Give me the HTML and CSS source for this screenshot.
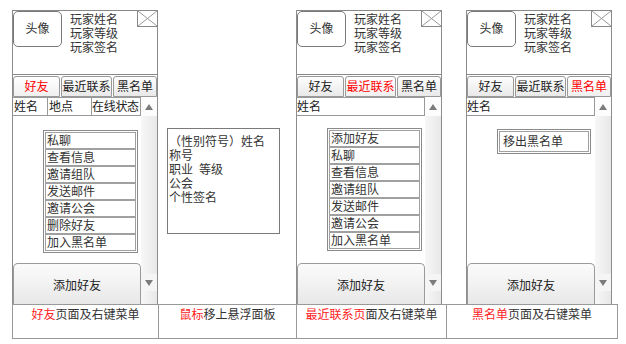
FILE: index.html
```html
<!DOCTYPE html>
<html lang="zh-CN">
<head>
  <meta charset="UTF-8" />
  <meta name="viewport" content="width=device-width, initial-scale=1" />
  <title>好友界面原型</title>
  <link rel="stylesheet" href="styles.css">
</head>
<body>
  <div class="board">
    <div class="screens">

      <!-- 好友页面 -->
      <section class="panel">
        <div class="top">
          <div class="avatar">头像</div>
          <div class="info">
            <div class="ln">玩家姓名</div>
            <div class="ln">玩家等级</div>
            <div class="ln">玩家签名</div>
          </div>
          <svg class="close" width="21" height="17" viewBox="0 0 21 17">
            <rect x="0.5" y="0.5" width="20" height="16" fill="#fff" stroke="#888"/>
            <path d="M1 1 L20 16 M20 1 L1 16" stroke="#999" stroke-width="1"/>
          </svg>
        </div>
        <div class="tabs">
          <div class="tab t1 on">好友</div>
          <div class="tab t2">最近联系</div>
          <div class="tab t3">黑名单</div>
        </div>
        <div class="list">
          <div class="main">
            <div class="head">
              <div class="cell c1">姓名</div>
              <div class="cell c2">地点</div>
              <div class="cell c3">在线状态</div>
            </div>
            <div class="menu">
              <div class="item">私聊</div>
              <div class="item">查看信息</div>
              <div class="item">邀请组队</div>
              <div class="item">发送邮件</div>
              <div class="item">邀请公会</div>
              <div class="item">删除好友</div>
              <div class="item">加入黑名单</div>
            </div>
            <div class="add">添加好友</div>
          </div>
          <div class="scroll">
            <div class="up"><i></i></div>
            <div class="track"></div>
            <div class="down"><i></i></div>
          </div>
        </div>
      </section>

      <!-- 悬浮面板 -->
      <div class="hover-col">
        <div class="tip">
          <div class="ln">（性别符号）姓名</div>
          <div class="ln">称号</div>
          <div class="ln">职业&ensp;等级</div>
          <div class="ln">公会</div>
          <div class="ln">个性签名</div>
        </div>
      </div>

      <!-- 最近联系页面 -->
      <section class="panel">
        <div class="top">
          <div class="avatar">头像</div>
          <div class="info">
            <div class="ln">玩家姓名</div>
            <div class="ln">玩家等级</div>
            <div class="ln">玩家签名</div>
          </div>
          <svg class="close" width="21" height="17" viewBox="0 0 21 17">
            <rect x="0.5" y="0.5" width="20" height="16" fill="#fff" stroke="#888"/>
            <path d="M1 1 L20 16 M20 1 L1 16" stroke="#999" stroke-width="1"/>
          </svg>
        </div>
        <div class="tabs">
          <div class="tab t1">好友</div>
          <div class="tab t2 on">最近联系</div>
          <div class="tab t3">黑名单</div>
        </div>
        <div class="list">
          <div class="main">
            <div class="head">
              <div class="cell wide">姓名</div>
            </div>
            <div class="menu menu-recent">
              <div class="item">添加好友</div>
              <div class="item">私聊</div>
              <div class="item">查看信息</div>
              <div class="item">邀请组队</div>
              <div class="item">发送邮件</div>
              <div class="item">邀请公会</div>
              <div class="item">加入黑名单</div>
            </div>
            <div class="add">添加好友</div>
          </div>
          <div class="scroll">
            <div class="up"><i></i></div>
            <div class="track"></div>
            <div class="down"><i></i></div>
          </div>
        </div>
      </section>

      <div class="gap"></div>

      <!-- 黑名单页面 -->
      <section class="panel">
        <div class="top">
          <div class="avatar">头像</div>
          <div class="info">
            <div class="ln">玩家姓名</div>
            <div class="ln">玩家等级</div>
            <div class="ln">玩家签名</div>
          </div>
          <svg class="close" width="21" height="17" viewBox="0 0 21 17">
            <rect x="0.5" y="0.5" width="20" height="16" fill="#fff" stroke="#888"/>
            <path d="M1 1 L20 16 M20 1 L1 16" stroke="#999" stroke-width="1"/>
          </svg>
        </div>
        <div class="tabs">
          <div class="tab t1">好友</div>
          <div class="tab t2">最近联系</div>
          <div class="tab t3 on">黑名单</div>
        </div>
        <div class="list">
          <div class="main">
            <div class="head">
              <div class="cell wide">姓名</div>
            </div>
            <div class="menu menu-black">
              <div class="item">移出黑名单</div>
            </div>
            <div class="add">添加好友</div>
          </div>
          <div class="scroll">
            <div class="up"><i></i></div>
            <div class="track"></div>
            <div class="down"><i></i></div>
          </div>
        </div>
      </section>
    </div>

    <div class="captions">
      <div class="cap"><span class="hl">好友</span>页面及右键菜单</div>
      <div class="cap"><span class="hl">鼠标</span>移上悬浮面板</div>
      <div class="cap"><span class="hl">最近联系页</span>面及右键菜单</div>
      <div class="cap"><span class="hl">黑名单</span>页面及右键菜单</div>
    </div>
  </div>
</body>
</html>
```

FILE: styles.css
```css
body {
  margin: 0;
  background: #fff;
  color: #333;
  font-family: "Liberation Sans", "Noto Sans CJK SC", sans-serif;
  font-size: 12px;
}
.board {
  padding: 10px 0 0 12px;
}
.screens {
  display: flex;
  height: 294px;
}
.panel {
  width: 146px;
  height: 294px;
  box-sizing: border-box;
  border-left: 1px solid #8c8c8c;
  border-right: 1px solid #8c8c8c;
  display: flex;
  flex-direction: column;
}
.top {
  height: 65px;
  box-sizing: border-box;
  border-top: 1px solid #888;
  border-bottom: 1px solid #888;
  display: flex;
  align-items: flex-start;
}
.avatar {
  width: 49px;
  height: 36px;
  box-sizing: border-box;
  border: 1px solid #7a7a7a;
  border-radius: 5px;
  display: flex;
  align-items: center;
  justify-content: center;
  line-height: 14px;
}
.info {
  margin: 2px 0 0 8px;
}
.ln {
  height: 14px;
  line-height: 14px;
  white-space: nowrap;
}
.close {
  display: block;
  margin: -1px -1px 0 auto;
}
.tabs {
  display: flex;
  gap: 1px;
  padding-top: 1px;
}
.tab {
  height: 21px;
  box-sizing: border-box;
  border: 1px solid #999;
  border-radius: 3px 3px 0 0;
  background: linear-gradient(#fdfdfd, #e9e9e9);
  text-align: center;
  line-height: 20px;
  color: #222;
}
.t1 { width: 47px; }
.t2 { width: 51px; }
.t3 { width: 44px; }
.tab.on {
  color: #f00;
  background: linear-gradient(#ffffff, #f0f0f0);
}
.list {
  flex: 1;
  display: flex;
}
.main {
  flex: 1;
  display: flex;
  flex-direction: column;
}
.head {
  display: flex;
  height: 19px;
  box-sizing: border-box;
  border-top: 1px solid #999;
  border-bottom: 1px solid #999;
  line-height: 18px;
  color: #222;
}
.cell {
  box-sizing: border-box;
  border-right: 1px solid #999;
  padding-left: 1px;
  white-space: nowrap;
}
.c1 { width: 35px; }
.c2 { width: 44px; }
.c3 { width: 49px; padding-left: 0; letter-spacing: -0.3px; }
.wide { flex: 1; padding-left: 0; }
.menu {
  width: 95px;
  box-sizing: border-box;
  margin: 14px 0 0 30px;
  border: 1px solid #8a8a8a;
  padding: 1px;
  background: #fff;
}
.menu-recent { margin-top: 12px; }
.menu-black { width: 94px; margin-top: 13px; }
.item {
  height: 17px;
  box-sizing: border-box;
  border: 1px solid #a0a0a0;
  padding-left: 1px;
  line-height: 16px;
  color: #333;
}
.menu-black .item {
  height: 21px;
  line-height: 20px;
  padding-left: 3px;
}
.add {
  margin-top: auto;
  height: 41px;
  box-sizing: border-box;
  border: 1px solid #9a9a9a;
  border-bottom: none;
  border-radius: 5px 5px 0 0;
  background: linear-gradient(#fbfbfb, #e8e8e8);
  display: flex;
  align-items: center;
  justify-content: center;
  color: #222;
}
.scroll {
  width: 16px;
  display: flex;
  flex-direction: column;
  background: linear-gradient(to right, #f7f7f7, #e8e8e8);
}
.up, .down {
  display: flex;
  align-items: center;
  justify-content: center;
}
.up {
  height: 19px;
  background: #fdfdfd;
}
.up i {
  border-left: 4px solid transparent;
  border-right: 4px solid transparent;
  border-bottom: 6px solid #7c7c7c;
}
.track {
  flex: 1;
}
.down {
  height: 17px;
  margin-bottom: 13px;
  background: #f5f5f5;
}
.down i {
  border-left: 4px solid transparent;
  border-right: 4px solid transparent;
  border-top: 6px solid #7c7c7c;
}
.hover-col {
  width: 138px;
}
.tip {
  width: 113px;
  height: 106px;
  box-sizing: border-box;
  margin: 118px 0 0 9px;
  border: 1px solid #7a7a7a;
  padding: 6px 0 0 1px;
  color: #333;
}
.gap {
  width: 24px;
}
.captions {
  display: grid;
  grid-template-columns: 146px 138px 150px 171px;
  height: 35px;
  box-sizing: border-box;
  border-top: 1px solid #999;
  border-bottom: 1px solid #999;
  border-right: 1px solid #999;
  width: 606px;
}
.cap {
  border-left: 1px solid #999;
  text-align: center;
  padding-top: 3px;
  line-height: 14px;
  color: #333;
}
.hl {
  color: #f22;
}
```
